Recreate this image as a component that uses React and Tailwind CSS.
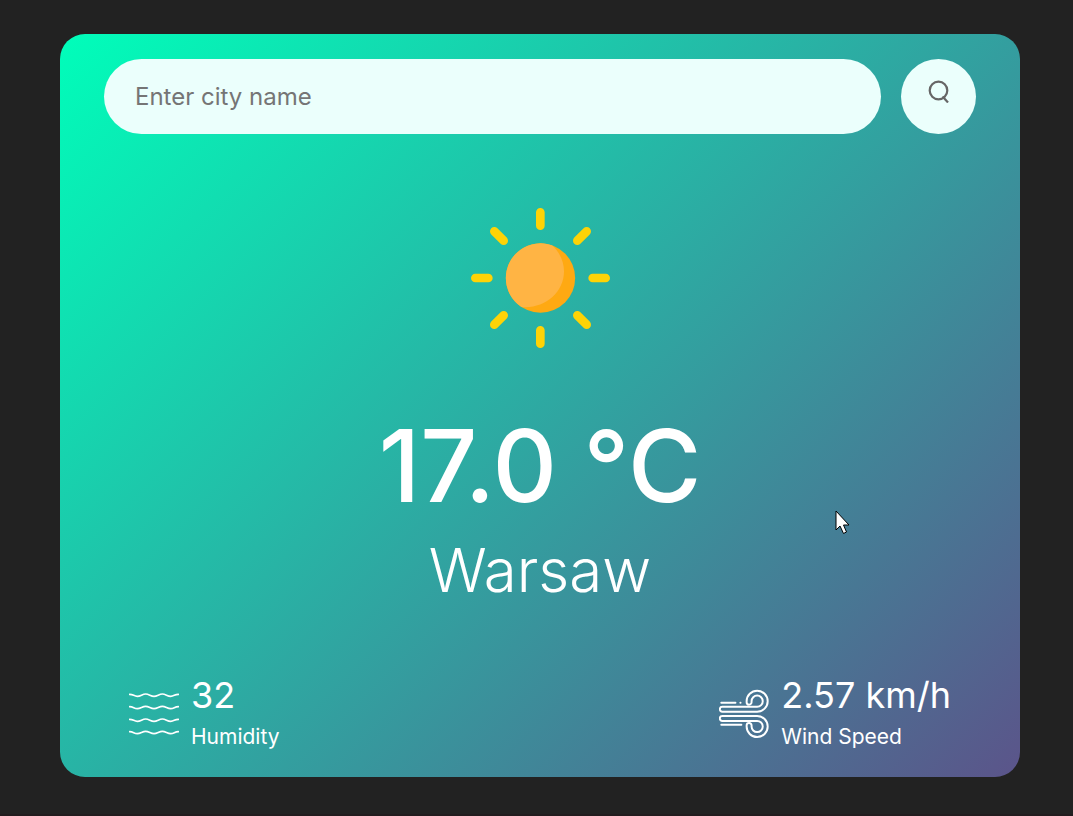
function SunIcon() {
  return (
    <svg viewBox="0 0 480 480" className="size-40" aria-label="Clear" role="img">
      <circle cx="241.500" cy="234" r="104" fill="#ffa912" />
      <path d="M276 136A104 104 0 0 0 137.500 234A104 104 0 0 0 184 321C250 328 312 280 312 214C312 184 298 155 276 136Z" fill="#ffb444" />
      <g stroke="#fed306" strokeWidth="26" strokeLinecap="round">
        <path d="M241 37V77M241 391V431M46 234H85M398 234H437M103 94L131 122M380 94L352 122M103 374L131 346M380 374L352 346" />
      </g>
    </svg>
  );
}

function HumidityIcon() {
  return (
    <svg viewBox="0 0 150 150" className="mt-2 size-[50px] shrink-0" fill="none" stroke="#fff" strokeWidth="5" strokeLinecap="round" aria-hidden="true">
      <path d="M2 16C13 16 15 22 25 22S40 15 50 15S65 22 75 22S90 15 100 15S115 22 125 22S137 16 148 16" />
      <path d="M2 53C13 53 15 59 25 59S40 52 50 52S65 59 75 59S90 52 100 52S115 59 125 59S137 53 148 53" />
      <path d="M2 91C13 91 15 97 25 97S40 90 50 90S65 97 75 97S90 90 100 90S115 97 125 97S137 91 148 91" />
      <path d="M2 128C13 128 15 134 25 134S40 127 50 127S65 134 75 134S90 127 100 127S115 134 125 134S137 128 148 128" />
    </svg>
  );
}

function WindIcon() {
  return (
    <svg viewBox="38 57 152 152" className="mt-2 size-[50px] shrink-0" fill="none" stroke="#fff" strokeWidth="6" strokeLinecap="round" strokeLinejoin="round" aria-hidden="true">
      <path d="M48 111H154A17 17 0 1 0 137 94V97A7.500 7.500 0 0 1 122 97V94A32 32 0 1 1 154 126H48A7.500 7.500 0 0 1 48 111Z" />
      <path d="M48 154H154A17 17 0 1 1 137 171V168A7.500 7.500 0 0 0 122 168V171A32 32 0 1 0 154 139H48A7.500 7.500 0 0 0 48 154Z" />
      <path d="M45 99H88M103 99H103.500M45 166H106" />
    </svg>
  );
}

function Detail({ icon, value, label }) {
  return (
    <div className="flex items-center gap-3">
      {icon}
      <div>
        <p className="text-4xl leading-[54px]">{value}</p>
        <p className="text-[21px] leading-[30px]">{label}</p>
      </div>
    </div>
  );
}

export default function App() {
  return (
    <div className="relative min-h-screen border-b-2 border-[#221c1e] bg-[#222222] pt-[34px] pr-[53px] pb-9 pl-[60px] font-['Inter',sans-serif]">
      <main className="rounded-[25px] bg-[linear-gradient(135deg,#00feba,#5b548a)] px-11 py-[25px] text-white">
        <form className="flex gap-5" onSubmit={(e) => e.preventDefault()}>
          <input
            type="text"
            aria-label="City name"
            placeholder="Enter city name"
            className="h-[75px] min-w-0 flex-1 rounded-full bg-[#ebfffc] px-[31px] text-2xl text-[#555555] outline-none placeholder:text-[#757575]"
          />
          <button type="submit" aria-label="Search" className="flex size-[75px] shrink-0 justify-center rounded-full bg-[#ebfffc] pt-5">
            <svg viewBox="0 0 24 24" className="size-6" fill="none" stroke="#666" strokeWidth="2.200" aria-hidden="true">
              <circle cx="11.500" cy="11.500" r="8.800" />
              <path d="M15.500 17.500L21 23.500" />
            </svg>
          </button>
        </form>
        <section className="flex flex-col items-center pt-[66px]">
          <SunIcon />
          <h1 className="mt-8 text-[100px] leading-[148px] font-medium">17.0 °C</h1>
          <h2 className="text-[60px] leading-[60px] font-light">Warsaw</h2>
        </section>
        <section className="mt-[68px] flex justify-between px-[25px]">
          <Detail icon={<HumidityIcon />} value="32" label="Humidity" />
          <Detail icon={<WindIcon />} value="2.57 km/h" label="Wind Speed" />
        </section>
      </main>
      <svg viewBox="0 0 16 26" className="absolute top-[510px] left-[835px] h-[26px] w-4" aria-hidden="true">
        <path d="M1 1V20L5 16L8.500 23.500L11.500 22L8.500 15H14Z" fill="#fff" stroke="#000" strokeWidth="1" />
      </svg>
    </div>
  );
}
